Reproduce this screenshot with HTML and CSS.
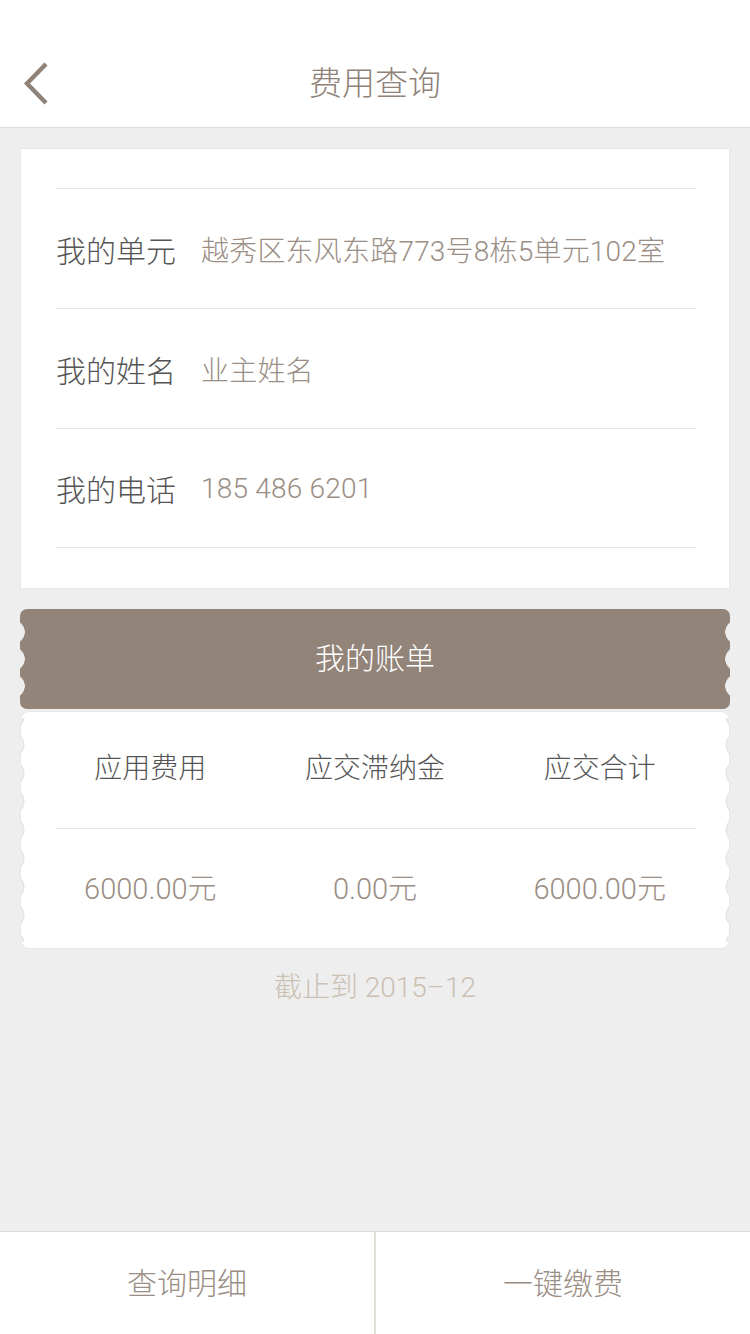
FILE: index.html
```html
<!DOCTYPE html>
<html lang="zh-CN">
<head>
<meta charset="utf-8">
<title>费用查询</title>
<link rel="stylesheet" href="styles.css">
</head>
<body>
<div class="page">
  <header class="topbar">
    <div class="nav">
      <span class="back">
        <svg width="30" height="46" viewBox="0 0 30 46"><path d="M26 3 L7 22.5 L26 42" fill="none" stroke="#8f8279" stroke-width="4.4" stroke-linecap="butt" stroke-linejoin="miter"/></svg>
      </span>
      <h1 class="title">费用查询</h1>
    </div>
  </header>

  <main class="main">
    <section class="card info">
      <div class="row"><span class="label">我的单元</span><span class="value">越秀区东风东路773号8栋5单元102室</span></div>
      <div class="row"><span class="label">我的姓名</span><span class="value">业主姓名</span></div>
      <div class="row"><span class="label">我的电话</span><span class="value">185 486 6201</span></div>
    </section>

    <div class="bill-head">我的账单</div>
    <section class="bill-body">
      <div class="cols heads">
        <span>应用费用</span><span>应交滞纳金</span><span>应交合计</span>
      </div>
      <div class="divider"></div>
      <div class="cols amounts">
        <span>6000.00元</span><span>0.00元</span><span>6000.00元</span>
      </div>
    </section>

    <p class="until">截止到 2015–12</p>
  </main>

  <footer class="bottombar">
    <button class="action">查询明细</button>
    <button class="action">一键缴费</button>
  </footer>
</div>
</body>
</html>
```

FILE: styles.css
```css
* { box-sizing: border-box; }
html, body { margin: 0; padding: 0; }
body {
  background: #eeeeee;
  font-family: Roboto, "Noto Sans CJK SC", sans-serif;
  font-weight: 300;
}
.page {
  width: 750px;
  height: 1334px;
  display: flex;
  flex-direction: column;
}
.topbar {
  background: #ffffff;
  padding-top: 40px;
  border-bottom: 1px solid #e2ded7;
}
.nav {
  height: 87px;
  display: flex;
  align-items: center;
  justify-content: center;
  position: relative;
}
.back {
  position: absolute;
  left: 20px;
  top: 21px;
  display: flex;
}
.title {
  margin: 0;
  font-size: 33px;
  font-weight: 300;
  color: #8f8279;
  line-height: 1;
}
.main {
  flex: 1;
  padding: 20px 20px 0;
}
.card {
  background: #fff;
  border: 1px solid #e7e7e7;
}
.info {
  padding: 39px 33px 40px 35px;
}
.row {
  height: 120px;
  border-top: 1px solid #e8e6e3;
  display: flex;
  align-items: center;
}
.row:last-child { border-bottom: 1px solid #e8e6e3; height: 120px; }
.label {
  width: 145px;
  font-size: 30px;
  color: #555555;
  flex-shrink: 0;
}
.value {
  font-size: 28px;
  color: #9a8e85;
  letter-spacing: 0.2px;
}
.bill-head {
  margin-top: 20px;
  height: 100px;
  padding-bottom: 6px;
  background: #928479;
  border-radius: 7px;
  color: #ffffff;
  font-size: 30px;
  display: flex;
  align-items: center;
  justify-content: center;
  position: relative;
}
.bill-head::before,
.bill-head::after {
  content: "";
  position: absolute;
  top: 8px;
  bottom: 8px;
  width: 6px;
  background-size: 6px 27px;
  background-repeat: repeat-y;
  background-position: 0 center;
}
.bill-head::before {
  left: 0;
  background-image: radial-gradient(circle 12px at -7px 50%, #eeeeee 11.5px, transparent 12px);
}
.bill-head::after {
  right: 0;
  background-image: radial-gradient(circle 12px at 13px 50%, #eeeeee 11.5px, transparent 12px);
}
.bill-body {
  margin-top: 2px;
  height: 238px;
  background: #fff;
  border: 1px solid #e7e7e7;
  border-radius: 9px;
  position: relative;
  display: flex;
  flex-direction: column;
}
.bill-body::before,
.bill-body::after {
  content: "";
  position: absolute;
  top: 6px;
  bottom: 6px;
  width: 6px;
  background-size: 6px 28.4px;
  background-repeat: repeat-y;
  background-position: 0 center;
}
.bill-body::before {
  left: -1px;
  background-image: radial-gradient(circle 12px at -8px 50%, #eeeeee 11px, #e4e4e4 11.6px, #e4e4e4 12.2px, transparent 12.8px);
}
.bill-body::after {
  right: -1px;
  background-image: radial-gradient(circle 12px at 14px 50%, #eeeeee 11px, #e4e4e4 11.6px, #e4e4e4 12.2px, transparent 12.8px);
}
.cols {
  display: grid;
  grid-template-columns: 1fr 1fr 1fr;
  padding: 0 17px;
  align-items: center;
  text-align: center;
  font-size: 28px;
}
.heads {
  height: 116px;
  padding-bottom: 8px;
  color: #555555;
}
.divider {
  height: 1px;
  background: #e6e6e6;
  margin: 0 33px 0 35px;
}
.amounts {
  flex: 1;
  padding-bottom: 6px;
  font-size: 29px;
  color: #9a8e85;
}
.until {
  margin: 19px 0 0;
  line-height: 40px;
  text-align: center;
  font-size: 28px;
  color: #cbc0b2;
}
.bottombar {
  height: 103px;
  background: #fff;
  border-top: 1px solid #dedcd2;
  display: flex;
}
.action {
  flex: 1;
  border: 0;
  background: #fff;
  font-family: inherit;
  font-weight: 300;
  font-size: 30px;
  color: #9a8e85;
  padding: 0 0 4px;
  margin: 0;
}
.action + .action {
  border-left: 2px solid #e3e2d8;
}
```
